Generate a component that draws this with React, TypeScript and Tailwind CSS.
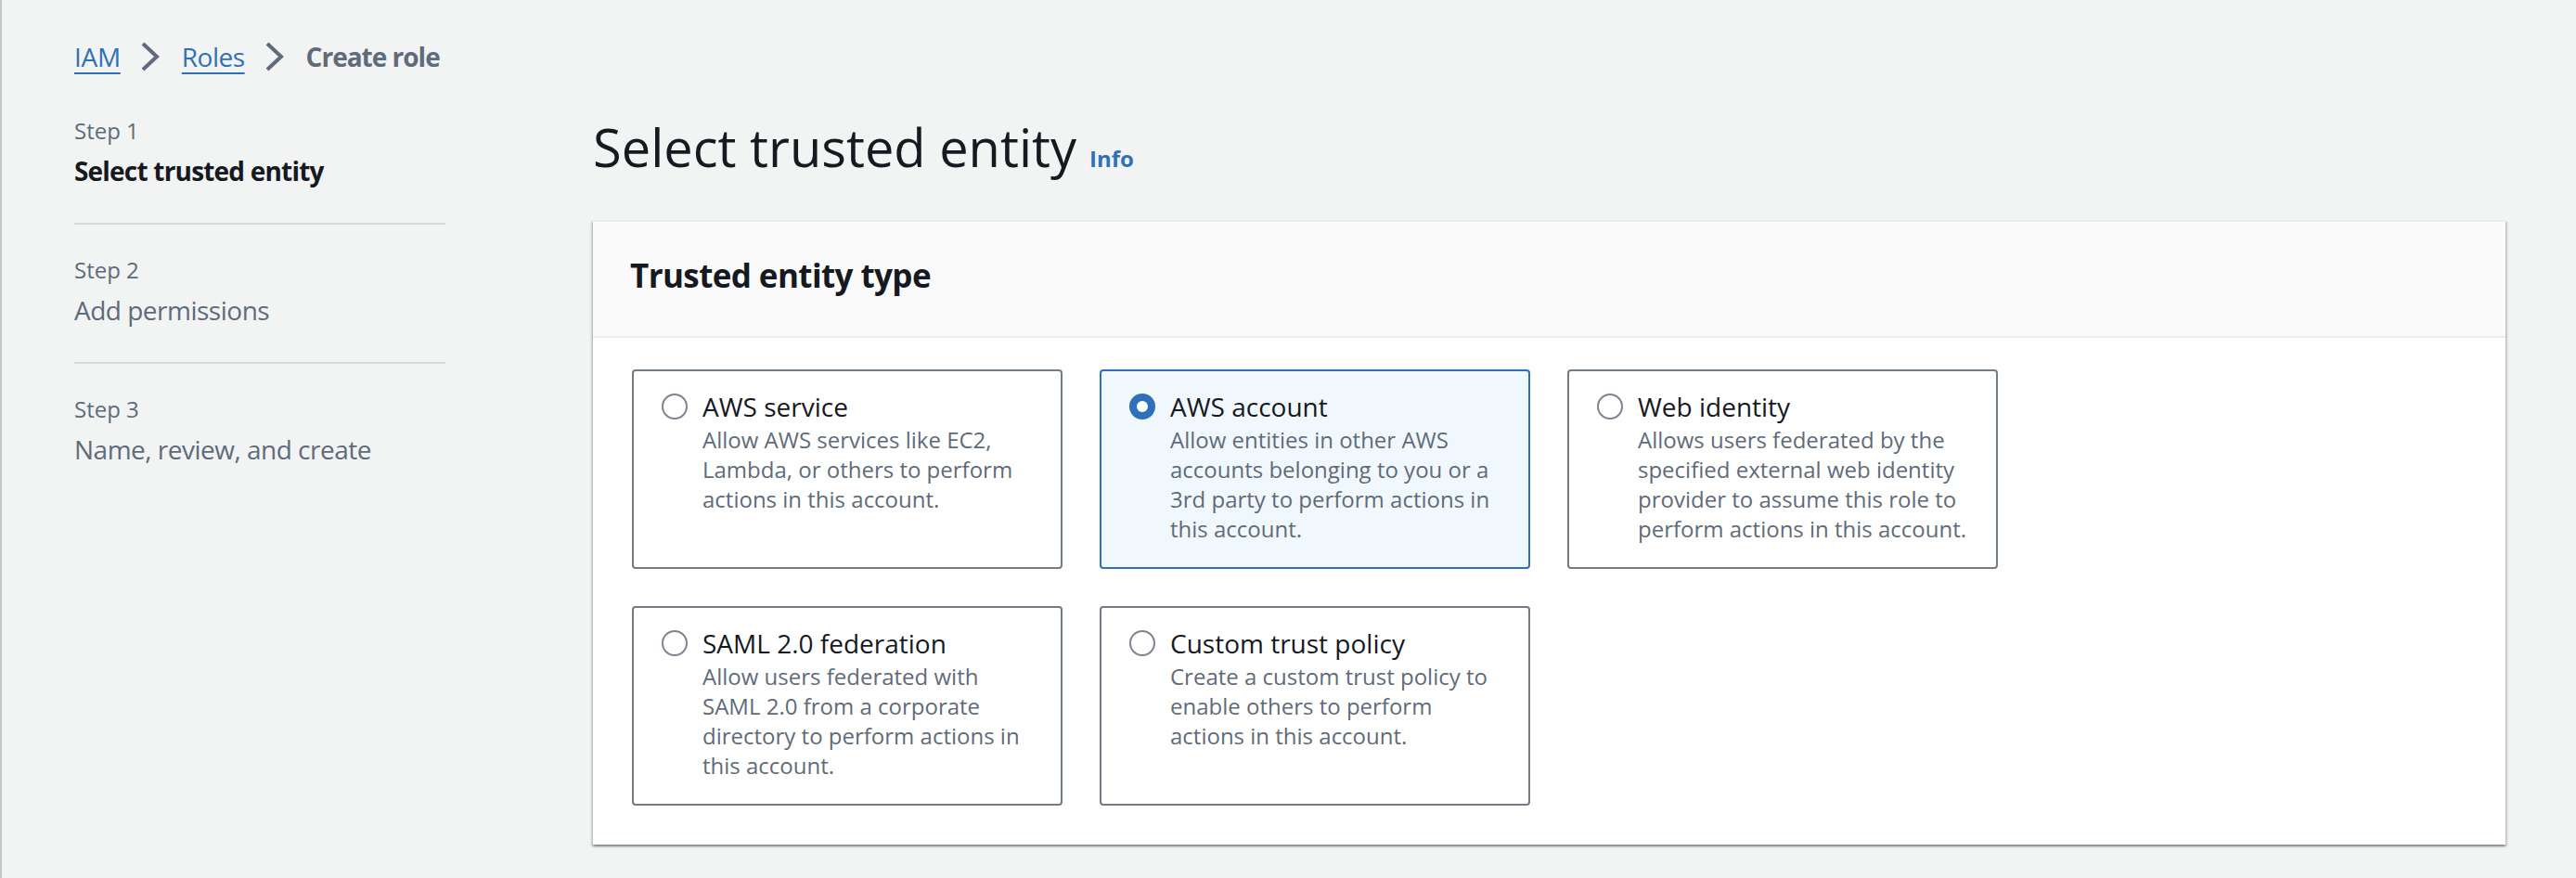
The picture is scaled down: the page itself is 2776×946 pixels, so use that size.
import React from 'react';

type Tile = { title: string; desc: string; selected?: boolean };

const TILES: Tile[] = [
  { title: 'AWS service', desc: 'Allow AWS services like EC2, Lambda, or others to perform actions in this account.' },
  {
    title: 'AWS account',
    desc: 'Allow entities in other AWS accounts belonging to you or a 3rd party to perform actions in this account.',
    selected: true,
  },
  {
    title: 'Web identity',
    desc: 'Allows users federated by the specified external web identity provider to assume this role to perform actions in this account.',
  },
  { title: 'SAML 2.0 federation', desc: 'Allow users federated with SAML 2.0 from a corporate directory to perform actions in this account.' },
  { title: 'Custom trust policy', desc: 'Create a custom trust policy to enable others to perform actions in this account.' },
];

const STEPS = [
  { label: 'Step 1', title: 'Select trusted entity', active: true },
  { label: 'Step 2', title: 'Add permissions' },
  { label: 'Step 3', title: 'Name, review, and create' },
];

function Chevron() {
  return (
    <svg width="21" height="32" viewBox="0 0 21 32" className="ml-[21px] mr-[24px] shrink-0" fill="none">
      <polyline points="3,2 18,16 3,30" stroke="#5f6b7a" strokeWidth="4" strokeLinejoin="miter" />
    </svg>
  );
}

function Radio({ checked }: { checked?: boolean }) {
  if (checked) {
    return (
      <span className="flex h-[28px] w-[28px] items-center justify-center rounded-full bg-[#2f71b8]">
        <span className="h-[12px] w-[12px] rounded-full bg-white" />
      </span>
    );
  }
  return <span className="h-[28px] w-[28px] rounded-full border-2 border-[#7d8590] bg-white" />;
}

function TileCard({ tile }: { tile: Tile }) {
  return (
    <div
      className={
        tile.selected
          ? 'flex gap-[16px] rounded-[4px] border-2 border-[#2f71b8] bg-[#f1f8fd] pl-[30px] pr-[30px] pt-[18px] pb-[25px]'
          : 'flex gap-[16px] rounded-[4px] border-2 border-[#737b85] bg-white pl-[30px] pr-[30px] pt-[18px] pb-[25px]'
      }
    >
      <div className="flex h-[40px] shrink-0 items-center">
        <Radio checked={tile.selected} />
      </div>
      <div className="min-w-0 flex-1">
        <div className="text-[28px] leading-[40px] text-[#16191f]">{tile.title}</div>
        <div className="text-[24px] leading-[32px] text-[#5f6b7a]">{tile.desc}</div>
      </div>
    </div>
  );
}

export default function App() {
  return (
    <div className="min-h-[946px] w-full border-l-2 border-[#c4c7c9] bg-[#f2f3f3] pt-[41px] font-['Open_Sans',sans-serif] text-[#16191f]">
      {/* breadcrumbs */}
      <div className="flex h-[40px] items-center pl-[78px] text-[28px] leading-[40px]">
        <span className="tracking-[-0.3px] text-[#2f71b8] underline decoration-2 underline-offset-[6px]">IAM</span>
        <Chevron />
        <span className="tracking-[-0.5px] text-[#2f71b8] underline decoration-2 underline-offset-[6px]">Roles</span>
        <Chevron />
        <span className="font-bold tracking-[-1px] text-[#5f6b7a]">Create role</span>
      </div>

      <div className="mt-[41px] flex pl-[78px] pr-[76px]">
        {/* wizard steps */}
        <nav className="w-[400px] shrink-0 pt-[3px]">
          {STEPS.map((s, i) => (
            <div
              key={s.label}
              className={i < STEPS.length - 1 ? 'mb-[33px] border-b-2 border-[#d5dbdb] pb-[36px]' : ''}
            >
              <div className="text-[24px] leading-[32px] text-[#5f6b7a]">{s.label}</div>
              <div
                className={
                  s.active
                    ? 'mt-[7px] text-[28px] font-bold leading-[40px] tracking-[-0.8px] text-[#16191f]'
                    : 'mt-[7px] text-[28px] leading-[40px] tracking-[-0.5px] text-[#5f6b7a]'
                }
              >
                {s.title}
              </div>
            </div>
          ))}
        </nav>

        {/* main */}
        <main className="ml-[159px] min-w-0 flex-1">
          <div className="flex items-baseline">
            <h1 className="text-[56px] font-normal leading-[72px] text-[#16191f]">Select trusted entity</h1>
            <span className="ml-[14px] text-[24px] font-bold text-[#2f71b8]">Info</span>
          </div>

          <section className="mt-[43px] border-t-2 border-[#eaeded] bg-white shadow-[0_2px_2px_rgba(0,28,36,0.3),2px_2px_2px_rgba(0,28,36,0.15),-2px_2px_2px_rgba(0,28,36,0.15)]">
            <div className="border-b-2 border-[#eaeded] bg-[#fafafa] pl-[40px] pr-[40px] pt-[36px] pb-[43px]">
              <h2 className="text-[35px] font-bold leading-[44px] tracking-[-0.6px] text-[#16191f]">Trusted entity type</h2>
            </div>
            <div className="grid grid-cols-[repeat(3,464px)] gap-x-[40px] gap-y-[40px] pl-[42px] pr-[42px] pt-[34px] pb-[42px]">
              {TILES.map(t => (
                <TileCard key={t.title} tile={t} />
              ))}
            </div>
          </section>
        </main>
      </div>
    </div>
  );
}
